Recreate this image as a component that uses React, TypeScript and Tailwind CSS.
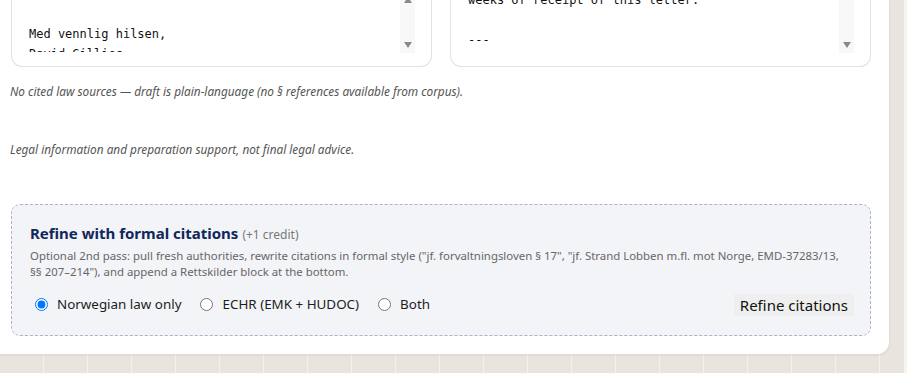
import React from 'react';

const ui = { fontFamily: '"Noto Sans", "Open Sans", sans-serif' };
const mono = { fontFamily: '"DejaVu Sans Mono", "Liberation Mono", monospace' };

// Fake textarea scrollbar, with the native-looking arrow heads
const ScrollTrack: React.FC<{ showUp?: boolean }> = ({ showUp }) => (
    <div className="relative w-[15px] h-[53px] bg-[#f8f8f8] shrink-0">
        {showUp && (
            <svg className="absolute left-[4px] -top-[3px]" width="8" height="6" viewBox="0 0 8 6">
                <path d="M0 6 L4 0 L8 6 Z" fill="#8a8a8a" />
            </svg>
        )}
        <svg className="absolute left-[4px] top-[42px]" width="8" height="6" viewBox="0 0 8 6">
            <path d="M0 0 L8 0 L4 6 Z" fill="#8a8a8a" />
        </svg>
    </div>
);

const DraftBox: React.FC<{ lines: string[]; offset: string; showUp?: boolean }> = ({ lines, offset, showUp }) => (
    <div className="h-[67px] border border-t-0 border-[#e2e2e2] rounded-b-[11px] bg-white pl-[17px] pr-[16px]">
        <div className="flex">
            <div className="flex-1 h-[52px] overflow-hidden">
                <div className={`${offset} text-[12px] leading-[20px] text-[#111] whitespace-pre`} style={mono}>
                    {lines.map((l, i) => (
                        <div key={i} className="h-[20px]">{l}</div>
                    ))}
                </div>
            </div>
            <ScrollTrack showUp={showUp} />
        </div>
    </div>
);

const Radio: React.FC<{ label: string; checked?: boolean }> = ({ label, checked }) => (
    <label className="flex items-center gap-[9px]">
        <input type="radio" name="scope" defaultChecked={checked} className="m-0 w-[13px] h-[13px]" />
        <span className="text-[13.4px] text-[#1d1d1d]">{label}</span>
    </label>
);

export default function App() {
    return (
        <div
            className="w-[907px] h-[373px] overflow-hidden flex bg-[#e9e5de] bg-[linear-gradient(to_right,#f3f1ec_1px,transparent_1px)] bg-[size:44px_44px] bg-[position:43px_0]"
            style={ui}
        >
            <div className="w-[889px] h-[354px] bg-white rounded-br-[12px] shadow-[0_1px_3px_rgba(0,0,0,0.08)] pl-[11px] pr-[18px] flex flex-col">
                {/* Draft panes */}
                <div className="grid grid-cols-2 gap-[18px]">
                    <DraftBox lines={['', 'Med vennlig hilsen,', 'David Gillies']} offset="mt-[4px]" showUp />
                    <DraftBox lines={['weeks of receipt of this letter.', '', '---']} offset="-mt-[10px]" />
                </div>

                <p className="mt-[16px] -ml-[1px] text-[11.8px] leading-[16px] italic text-[#555]">
                    No cited law sources — draft is plain-language (no § references available from corpus).
                </p>

                <p className="mt-[42px] -ml-[1px] text-[11.8px] leading-[16px] italic text-[#555]">
                    Legal information and preparation support, not final legal advice.
                </p>

                {/* Refine box */}
                <div className="mt-[47px] h-[132px] border border-dashed border-[#a9b3cc] rounded-[9px] bg-[#f3f4f8] pl-[18px] pr-[18px] pt-[17px]">
                    <div className="flex items-baseline gap-[4px]">
                        <span className="text-[15px] font-bold text-[#10275a]">Refine with formal citations</span>
                        <span className="text-[12px] text-[#777]">(+1 credit)</span>
                    </div>
                    <p className="mt-[3px] text-[11.4px] leading-[16px] text-[#666]">
                        Optional 2nd pass: pull fresh authorities, rewrite citations in formal style ("jf. forvaltningsloven § 17", "jf. Strand Lobben m.fl. mot Norge, EMD-37283/13,
                        <br />
                        §§ 207–214"), and append a Rettskilder block at the bottom.
                    </p>
                    <div className="mt-[14px] flex items-center pl-[5px]">
                        <div className="flex items-center gap-[19px]">
                            <Radio label="Norwegian law only" checked />
                            <Radio label="ECHR (EMK + HUDOC)" />
                            <Radio label="Both" />
                        </div>
                        <button className="ml-auto -mr-[2px] h-[22px] px-[6px] bg-[#efefef] text-[15px] text-[#111] leading-[22px]">
                            Refine citations
                        </button>
                    </div>
                </div>
            </div>
            <div className="flex-1 flex justify-end">
                <div className="w-[3px] h-full bg-[#f6f4f0]" />
            </div>
        </div>
    );
}
